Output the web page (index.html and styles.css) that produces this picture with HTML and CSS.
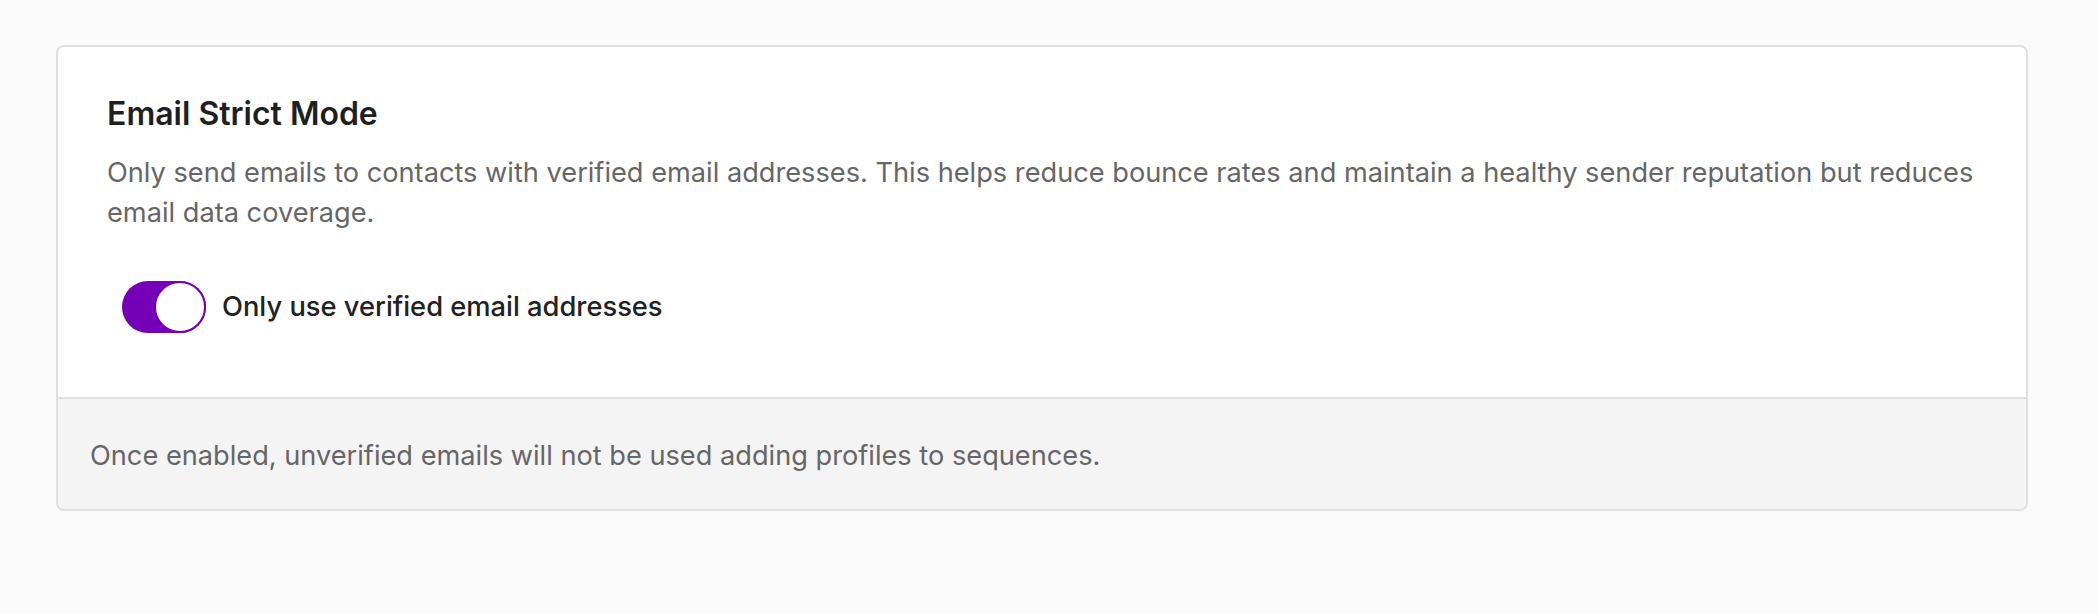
FILE: index.html
```html
<!DOCTYPE html>
<html lang="en">
<head>
    <meta charset="UTF-8">
    <meta name="viewport" content="width=device-width, initial-scale=1.0">
    <title>Email Strict Mode</title>
    <link rel="stylesheet" href="styles.css">
</head>
<body>

<main class="settings">
    <section class="card">
        <div class="card-body">
            <h2 class="card-title">Email Strict Mode</h2>
            <p class="card-desc">Only send emails to contacts with verified email addresses. This helps reduce bounce rates and maintain a healthy sender reputation but reduces email data coverage.</p>

            <label class="toggle-row">
                <input type="checkbox" class="toggle-input" checked>
                <span class="toggle"><span class="knob"></span></span>
                <span class="toggle-label">Only use verified email addresses</span>
            </label>
        </div>
        <div class="card-footer">
            <p>Once enabled, unverified emails will not be used adding profiles to sequences.</p>
        </div>
    </section>
</main>

</body>
</html>
```

FILE: styles.css
```css
body {
    font-family: Inter, "Noto Sans", sans-serif;
    background: #fafafa;
    margin: 0;
    padding: 45px 70px 0 56px;
}

.card {
    background: white;
    border: 2px solid #dfdfdf;
    border-radius: 8px;
    overflow: hidden;
}

.card-body {
    padding: 47px 30px 64px 49px;
}

.card-title {
    font-size: 32px;
    font-weight: 600;
    line-height: 40px;
    color: #1f1f1f;
    margin: 0 0 19px 0;
}

.card-desc {
    font-size: 27.2px;
    line-height: 40px;
    color: #666;
    margin: 0 0 48px 0;
}

.toggle-row {
    display: flex;
    align-items: center;
    gap: 16px;
    margin-left: 15px;
    cursor: pointer;
}

.toggle-input {
    display: none;
}

.toggle {
    position: relative;
    width: 84px;
    height: 52px;
    border-radius: 26px;
    background: #d0d0d0;
    flex-shrink: 0;
}

.knob {
    position: absolute;
    top: 0;
    left: 0;
    width: 48px;
    height: 48px;
    border-radius: 50%;
    background: white;
    border: 2px solid #d0d0d0;
}

.toggle-input:checked + .toggle {
    background: #7500b8;
}

.toggle-input:checked + .toggle .knob {
    left: 32px;
    border-color: #7500b8;
}

.toggle-label {
    font-size: 27.3px;
    font-weight: 500;
    line-height: 40px;
    color: #222;
}

.card-footer {
    background: #f4f4f4;
    border-top: 2px solid #dfdfdf;
    padding: 37px 32px 33px 32px;
}

.card-footer p {
    font-size: 27.2px;
    line-height: 40px;
    color: #666;
    margin: 0;
}
```
